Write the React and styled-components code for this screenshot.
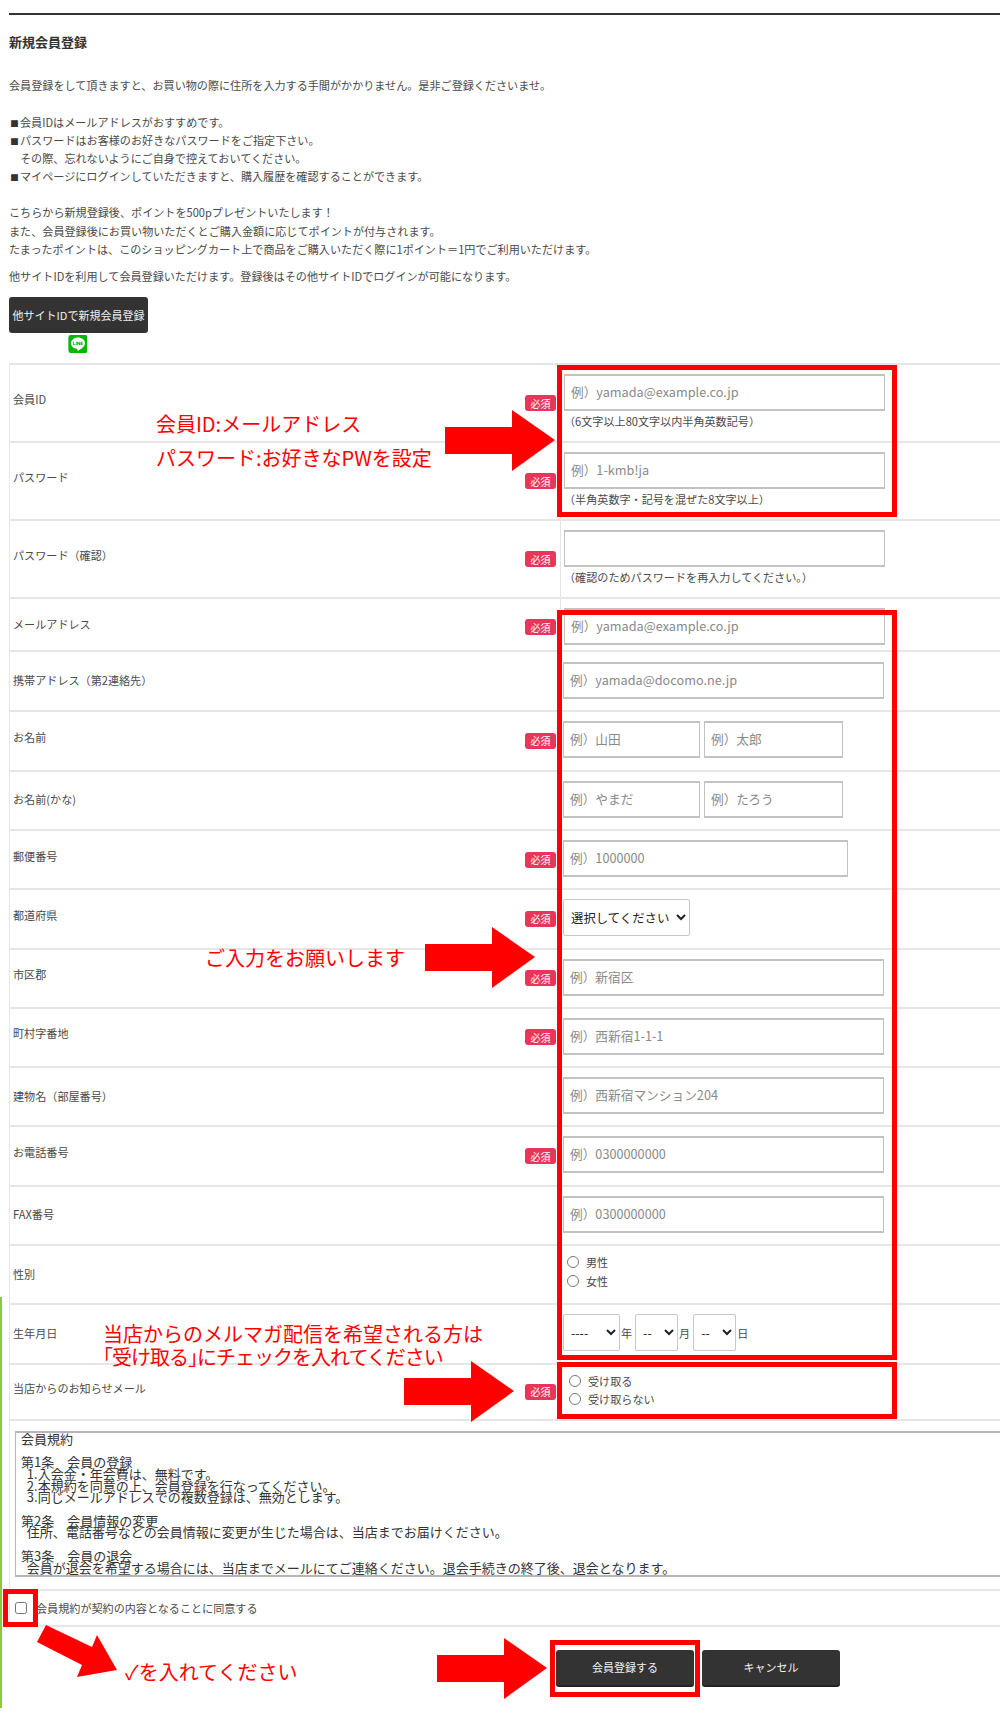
import React from 'react';
import styled, { createGlobalStyle } from 'styled-components';
import { FaLine } from 'react-icons/fa';

const GlobalStyle = createGlobalStyle`
  html, body {
    margin: 0;
    padding: 0;
    background: #fff;
  }
  body {
    font-family: "Noto Sans CJK JP", "Noto Sans", sans-serif;
    font-size: 11.1px;
    color: #4a4a4a;
  }
`;

const Page = styled.div`
  position: relative;
  width: 1000px;
  height: 1726px;
  overflow: hidden;
  padding: 13px 0 0 9px;
  box-sizing: border-box;
`;

const TopRule = styled.div`
  height: 2px;
  background: #333;
`;

const Heading = styled.h2`
  margin: 17.5px 0 0;
  font-size: 13px;
  font-weight: 700;
  line-height: 18px;
  color: #333;
`;

const Lines = styled.div`
  margin-top: ${(p) => p.$top}px;
`;

const Line = styled.div`
  height: 18.2px;
  line-height: 18.2px;
  padding-left: ${(p) => (p.$indent ? '11px' : '0')};
`;

const Bullet = styled.span`
  display: inline-block;
  width: 11px;
  line-height: 0;
  text-align: center;
  font-size: 8.5px;
  color: #333;
`;

const OtherIdButton = styled.button`
  display: block;
  margin-top: 12px;
  width: 139px;
  height: 36px;
  padding: 0;
  border: 0;
  border-radius: 3px;
  background: #333;
  color: #f0f0f0;
  font-family: inherit;
  font-size: 11px;
`;

const LineIcon = styled.div`
  display: flex;
  align-items: center;
  justify-content: center;
  margin: 2px 0 0 59px;
  width: 19px;
  height: 18px;
  color: #00b900;
  overflow: hidden;
  svg {
    flex: none;
    width: 22px;
    height: 22px;
  }
`;

const Table = styled.div`
  margin-top: 10px;
`;

const RowBox = styled.div`
  display: grid;
  grid-template-columns: 551px 1fr;
  box-sizing: border-box;
  height: ${(p) => p.$h}px;
  border-top: 2px solid #e6e6e6;
`;

const LabelCell = styled.div`
  display: flex;
  align-items: center;
  justify-content: space-between;
  padding: 0 4px 0 3px;
  border-left: 1px solid #e8e8e8;
`;

const LabelText = styled.span`
  position: relative;
  top: ${(p) => (p.$raised ? '-4px' : '-1px')};
`;

const Required = styled.span`
  display: flex;
  align-items: center;
  justify-content: center;
  width: 31px;
  height: 16px;
  margin-top: ${(p) => (p.$low ? '5px' : '0')};
  border-radius: 3px;
  background: #e8355a;
  color: #fff;
  font-size: 10px;
`;

const ValueCell = styled.div`
  padding: ${(p) => p.$top ?? 9}px 0 0 ${(p) => p.$inset ?? 2}px;
  border-left: 1px solid #e4e4e4;
`;

const FieldRow = styled.div`
  display: flex;
  align-items: center;
  gap: ${(p) => p.$gap ?? 4}px;
`;

const TextField = styled.input`
  display: block;
  box-sizing: border-box;
  width: ${(p) => p.$w ?? 321}px;
  height: 37px;
  padding: 0 6px 2px;
  border: 1px solid #c2c2c2;
  border-bottom-width: 2px;
  border-top-width: 2px;
  background: #fff;
  font-family: inherit;
  font-size: 12.7px;
  color: #333;
  outline: 0;
  &::placeholder {
    color: #8a8a8a;
    opacity: 1;
  }
`;

const Hint = styled.div`
  margin-top: 1px;
  line-height: 18px;
`;

const Select = styled.select`
  box-sizing: border-box;
  width: ${(p) => p.$w}px;
  height: 37px;
  padding: 0 3px;
  border: 1px solid #c8c8c8;
  border-radius: 2px;
  background-color: #fff;
  font-family: inherit;
  font-size: 12.4px;
  color: #222;
`;

const Unit = styled.span`
  margin: 0 3px 0 1px;
`;

const RadioLine = styled.label`
  display: flex;
  align-items: center;
  height: 18.4px;
  gap: 7px;
`;

const Radio = styled.input.attrs({ type: 'radio' })`
  width: 12px;
  height: 12px;
  margin: 0 0 0 ${(p) => p.$left ?? 4}px;
`;

const TermsBlock = styled.div`
  box-sizing: border-box;
  height: 170px;
  padding: 10px 0 0 5px;
  border-top: 2px solid #e6e6e6;
  border-left: 1px solid #e8e8e8;
  width: 100%;
`;

const TermsBox = styled.textarea`
  display: block;
  box-sizing: border-box;
  width: 1000px;
  height: 146px;
  padding: 0 0 0 5px;
  border: 1px solid #b5b5b5;
  border-width: 2px 1px;
  border-radius: 0;
  background: #fff;
  font-family: "Noto Sans CJK JP", sans-serif;
  font-size: 13px;
  line-height: 11.7px;
  color: #333;
  resize: none;
  overflow: hidden;
  outline: 0;
`;

const AgreeRow = styled.label`
  display: flex;
  align-items: center;
  gap: 9px;
  box-sizing: border-box;
  height: 38px;
  padding-left: 5px;
  border-top: 2px solid #e6e6e6;
  border-bottom: 2px solid #e6e6e6;
  border-left: 1px solid #e8e8e8;
`;

const AgreeBox = styled.input.attrs({ type: 'checkbox' })`
  width: 12px;
  height: 12px;
  margin: 0;
`;

const Actions = styled.div`
  display: flex;
  gap: 8px;
  margin: 23px 0 0 547px;
`;

const ActionButton = styled.button`
  width: 138px;
  height: 37px;
  padding: 0;
  border: 0;
  border-bottom: 2px solid #222;
  border-radius: 3px;
  background: #333;
  color: #f2f2f2;
  font-family: inherit;
  font-size: 11px;
`;

/* annotations pasted on top of the screenshot */
const ArrowLayer = styled.svg`
  position: absolute;
  left: 0;
  top: 0;
  width: 1000px;
  height: 1726px;
  pointer-events: none;
`;

const RedBox = styled.div`
  position: absolute;
  left: ${(p) => p.$x}px;
  top: ${(p) => p.$y}px;
  width: ${(p) => p.$w}px;
  height: ${(p) => p.$h}px;
  box-sizing: border-box;
  border: 5px solid #f00;
  pointer-events: none;
`;

const Note = styled.div`
  position: absolute;
  left: ${(p) => p.$x}px;
  top: ${(p) => p.$y}px;
  font-size: 20px;
  line-height: 24px;
  letter-spacing: ${(p) => p.$track ?? 0}px;
  color: #f00;
  white-space: nowrap;
`;

const GreenEdge = styled.div`
  position: absolute;
  left: 0;
  top: 1297px;
  width: 2px;
  height: 411px;
  background: #8dc63f;
`;

const Row = ({ label, required, flat, h = 59.33, top, inset, children }) => (
  <RowBox $h={h}>
    <LabelCell>
      <LabelText $raised={required && !flat}>{label}</LabelText>
      {required && <Required $low={flat}>必須</Required>}
    </LabelCell>
    <ValueCell $top={top} $inset={inset}>{children}</ValueCell>
  </RowBox>
);

const arrow = (x, y) =>
  `${x},${y + 17} ${x + 67},${y + 17} ${x + 67},${y} ${x + 110},${y + 30} ${x + 67},${y + 61} ${x + 67},${y + 44} ${x},${y + 44}`;

const terms = `会員規約

第1条　会員の登録
  1.入会金・年会費は、無料です。
  2.本規約を同意の上、会員登録を行なってください。
  3.同じメールアドレスでの複数登録は、無効とします。

第2条　会員情報の変更
  住所、電話番号などの会員情報に変更が生じた場合は、当店までお届けください。

第3条　会員の退会
  会員が退会を希望する場合には、当店までメールにてご連絡ください。退会手続きの終了後、退会となります。`;

export default function App() {
  return (
    <Page>
      <GlobalStyle />
      <TopRule />
      <Heading>新規会員登録</Heading>
      <Lines $top={25}>
        <Line>会員登録をして頂きますと、お買い物の際に住所を入力する手間がかかりません。是非ご登録くださいませ。</Line>
      </Lines>
      <Lines $top={19}>
        <Line><Bullet>■</Bullet>会員IDはメールアドレスがおすすめです。</Line>
        <Line><Bullet>■</Bullet>パスワードはお客様のお好きなパスワードをご指定下さい。</Line>
        <Line $indent>その際、忘れないようにご自身で控えておいてください。</Line>
        <Line><Bullet>■</Bullet>マイページにログインしていただきますと、購入履歴を確認することができます。</Line>
      </Lines>
      <Lines $top={18}>
        <Line>こちらから新規登録後、ポイントを500pプレゼントいたします！</Line>
        <Line>また、会員登録後にお買い物いただくとご購入金額に応じてポイントが付与されます。</Line>
        <Line>たまったポイントは、このショッピングカート上で商品をご購入いただく際に1ポイント＝1円でご利用いただけます。</Line>
      </Lines>
      <Lines $top={9}>
        <Line>他サイトIDを利用して会員登録いただけます。登録後はその他サイトIDでログインが可能になります。</Line>
      </Lines>
      <OtherIdButton>他サイトIDで新規会員登録</OtherIdButton>
      <LineIcon><FaLine /></LineIcon>

      <Table>
        <Row label="会員ID" required h={78} inset={3}>
          <TextField placeholder="例）yamada@example.co.jp" />
          <Hint>（6文字以上80文字以内半角英数記号）</Hint>
        </Row>
        <Row label="パスワード" required h={78} inset={3}>
          <TextField placeholder="例）1-kmb!ja" />
          <Hint>（半角英数字・記号を混ぜた8文字以上）</Hint>
        </Row>
        <Row label="パスワード（確認）" required h={78} inset={3}>
          <TextField />
          <Hint>（確認のためパスワードを再入力してください。）</Hint>
        </Row>
        <Row label="メールアドレス" required flat h={53} inset={3}>
          <TextField placeholder="例）yamada@example.co.jp" />
        </Row>
        <Row label="携帯アドレス（第2連絡先）" h={60} top={10}>
          <TextField placeholder="例）yamada@docomo.ne.jp" />
        </Row>
        <Row label="お名前" required>
          <FieldRow>
            <TextField $w={137} placeholder="例）山田" />
            <TextField $w={139} placeholder="例）太郎" />
          </FieldRow>
        </Row>
        <Row label="お名前(かな)">
          <FieldRow>
            <TextField $w={137} placeholder="例）やまだ" />
            <TextField $w={139} placeholder="例）たろう" />
          </FieldRow>
        </Row>
        <Row label="郵便番号" required>
          <TextField $w={285} placeholder="例）1000000" />
        </Row>
        <Row label="都道府県" required>
          <Select $w={127} defaultValue="">
            <option value="">選択してください</option>
          </Select>
        </Row>
        <Row label="市区郡" required>
          <TextField placeholder="例）新宿区" />
        </Row>
        <Row label="町村字番地" required>
          <TextField placeholder="例）西新宿1-1-1" />
        </Row>
        <Row label="建物名（部屋番号）">
          <TextField placeholder="例）西新宿マンション204" />
        </Row>
        <Row label="お電話番号" required>
          <TextField placeholder="例）0300000000" />
        </Row>
        <Row label="FAX番号">
          <TextField placeholder="例）0300000000" />
        </Row>
        <Row label="性別" top={7}>
          <RadioLine><Radio name="sex" />男性</RadioLine>
          <RadioLine><Radio name="sex" />女性</RadioLine>
        </Row>
        <Row label="生年月日">
          <FieldRow $gap={0}>
            <Select $w={57}><option>----</option></Select>
            <Unit>年</Unit>
            <Select $w={43}><option>--</option></Select>
            <Unit>月</Unit>
            <Select $w={43}><option>--</option></Select>
            <Unit>日</Unit>
          </FieldRow>
        </Row>
        <Row label="当店からのお知らせメール" required h={56} top={7}>
          <RadioLine><Radio name="mail" $left={6} />受け取る</RadioLine>
          <RadioLine><Radio name="mail" $left={6} />受け取らない</RadioLine>
        </Row>
      </Table>

      <TermsBlock>
        <TermsBox readOnly value={terms} />
      </TermsBlock>
      <AgreeRow>
        <AgreeBox />
        会員規約が契約の内容となることに同意する
      </AgreeRow>
      <Actions>
        <ActionButton>会員登録する</ActionButton>
        <ActionButton>キャンセル</ActionButton>
      </Actions>

      <GreenEdge />
      <ArrowLayer viewBox="0 0 1000 1726">
        <polygon fill="#f00" points={arrow(445, 410)} />
        <polygon fill="#f00" points={arrow(425, 927)} />
        <polygon fill="#f00" points={arrow(404, 1361)} />
        <polygon fill="#f00" points={arrow(437, 1638)} />
        <polygon fill="#f00" points="46,1625 92,1647 97,1635 117,1670 77,1677 82,1665 37,1642" />
      </ArrowLayer>
      <RedBox $x={557} $y={365} $w={340} $h={152} />
      <RedBox $x={557} $y={610} $w={340} $h={750} />
      <RedBox $x={557} $y={1362} $w={340} $h={57} />
      <RedBox $x={3} $y={1589} $w={35} $h={38} />
      <RedBox $x={550} $y={1640} $w={150} $h={57} />
      <Note $x={156} $y={412}>会員ID:メールアドレス</Note>
      <Note $x={156} $y={446}>パスワード:お好きなPWを設定</Note>
      <Note $x={205} $y={946}>ご入力をお願いします</Note>
      <Note $x={103} $y={1322}>当店からのメルマガ配信を希望される方は</Note>
      <Note $x={103} $y={1345} $track={-1}>｢受け取る｣にチェックを入れてください</Note>
      <Note $x={125} $y={1660}>✓を入れてください</Note>
    </Page>
  );
}
